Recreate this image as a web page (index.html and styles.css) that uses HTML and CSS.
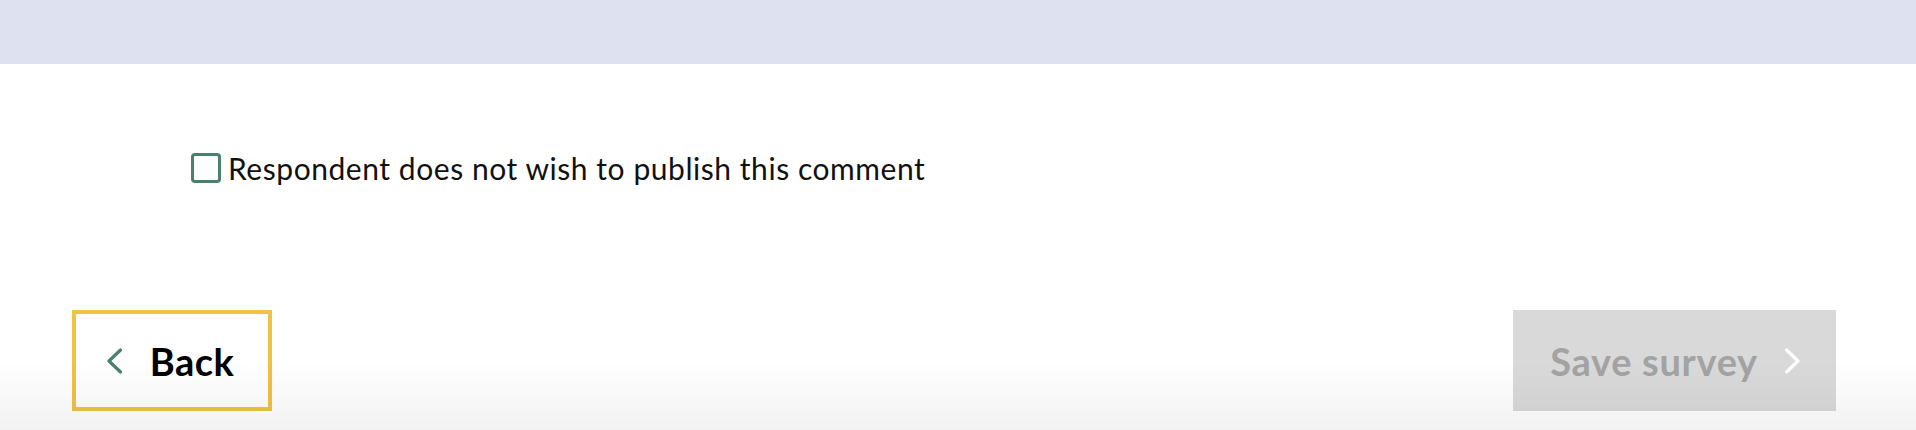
FILE: index.html
```html
<!DOCTYPE html>
<html lang="en">
<head>
<meta charset="utf-8">
<title>Survey</title>
<link rel="stylesheet" href="styles.css">
</head>
<body>
<div class="header"></div>
<main class="content">
  <label class="check-row">
    <span class="checkbox"></span>
    <span class="check-label">Respondent does not wish to publish this comment</span>
  </label>
  <div class="actions">
    <button class="btn btn-back" type="button">
      <svg class="chev" width="17" height="26" viewBox="0 0 17 26"><polyline points="14.5,2 3,13 14.5,24" fill="none" stroke="#4a806e" stroke-width="3.2" stroke-linecap="round" stroke-linejoin="round"/></svg>
      <span>Back</span>
    </button>
    <button class="btn btn-save" type="button" disabled>
      <span>Save survey</span>
      <svg class="chev" width="17" height="26" viewBox="0 0 17 26"><polyline points="2.5,2 14,13 2.5,24" fill="none" stroke="#ffffff" stroke-width="3.2" stroke-linecap="round" stroke-linejoin="round"/></svg>
    </button>
  </div>
</main>
<div class="fade"></div>
</body>
</html>
```
FILE: styles.css
```css
html, body {
  margin: 0;
  padding: 0;
  background: #ffffff;
  height: 430px;
  overflow: hidden;
}
body {
  font-family: "Lato", "Liberation Sans", sans-serif;
  color: #0b0c0c;
  position: relative;
}
.header {
  height: 64px;
  background: #dee1f0;
}
.content {
  display: flex;
  flex-direction: column;
}
.check-row {
  display: flex;
  align-items: center;
  gap: 7px;
  margin: 89px 0 0 191px;
  height: 30px;
}
.checkbox {
  box-sizing: border-box;
  width: 30px;
  height: 30px;
  border: 3px solid #4a806e;
  border-radius: 4px;
  background: #fff;
  flex: none;
}
.check-label {
  font-size: 30px;
  line-height: 30px;
  color: #111;
  letter-spacing: 0.55px;
}
.actions {
  display: flex;
  justify-content: space-between;
  margin-top: 127px;
  padding: 0 80px 0 72px;
}
.btn {
  box-sizing: border-box;
  height: 101px;
  display: flex;
  align-items: center;
  justify-content: center;
  gap: 27px;
  font-family: "Lato", "Liberation Sans", sans-serif;
  font-weight: 700;
  font-size: 38px;
  letter-spacing: 0.5px;
  border: none;
  margin: 0;
  padding: 0;
}
.btn-back {
  width: 200px;
  background: #ffffff;
  border: 4px solid #f0c243;
  color: #000;
  padding: 0 4px 0 0;
}
.btn-save {
  width: 323px;
  background: #d9d9d9;
  color: #a3a3a3;
  gap: 26px;
  padding: 0 0 0 2px;
  letter-spacing: 0.7px;
}
.chev {
  display: block;
  flex: none;
}
.fade {
  position: absolute;
  left: 0;
  right: 0;
  bottom: 0;
  height: 70px;
  background: linear-gradient(to bottom, rgba(0,0,0,0), rgba(0,0,0,0.05));
  pointer-events: none;
}
```
